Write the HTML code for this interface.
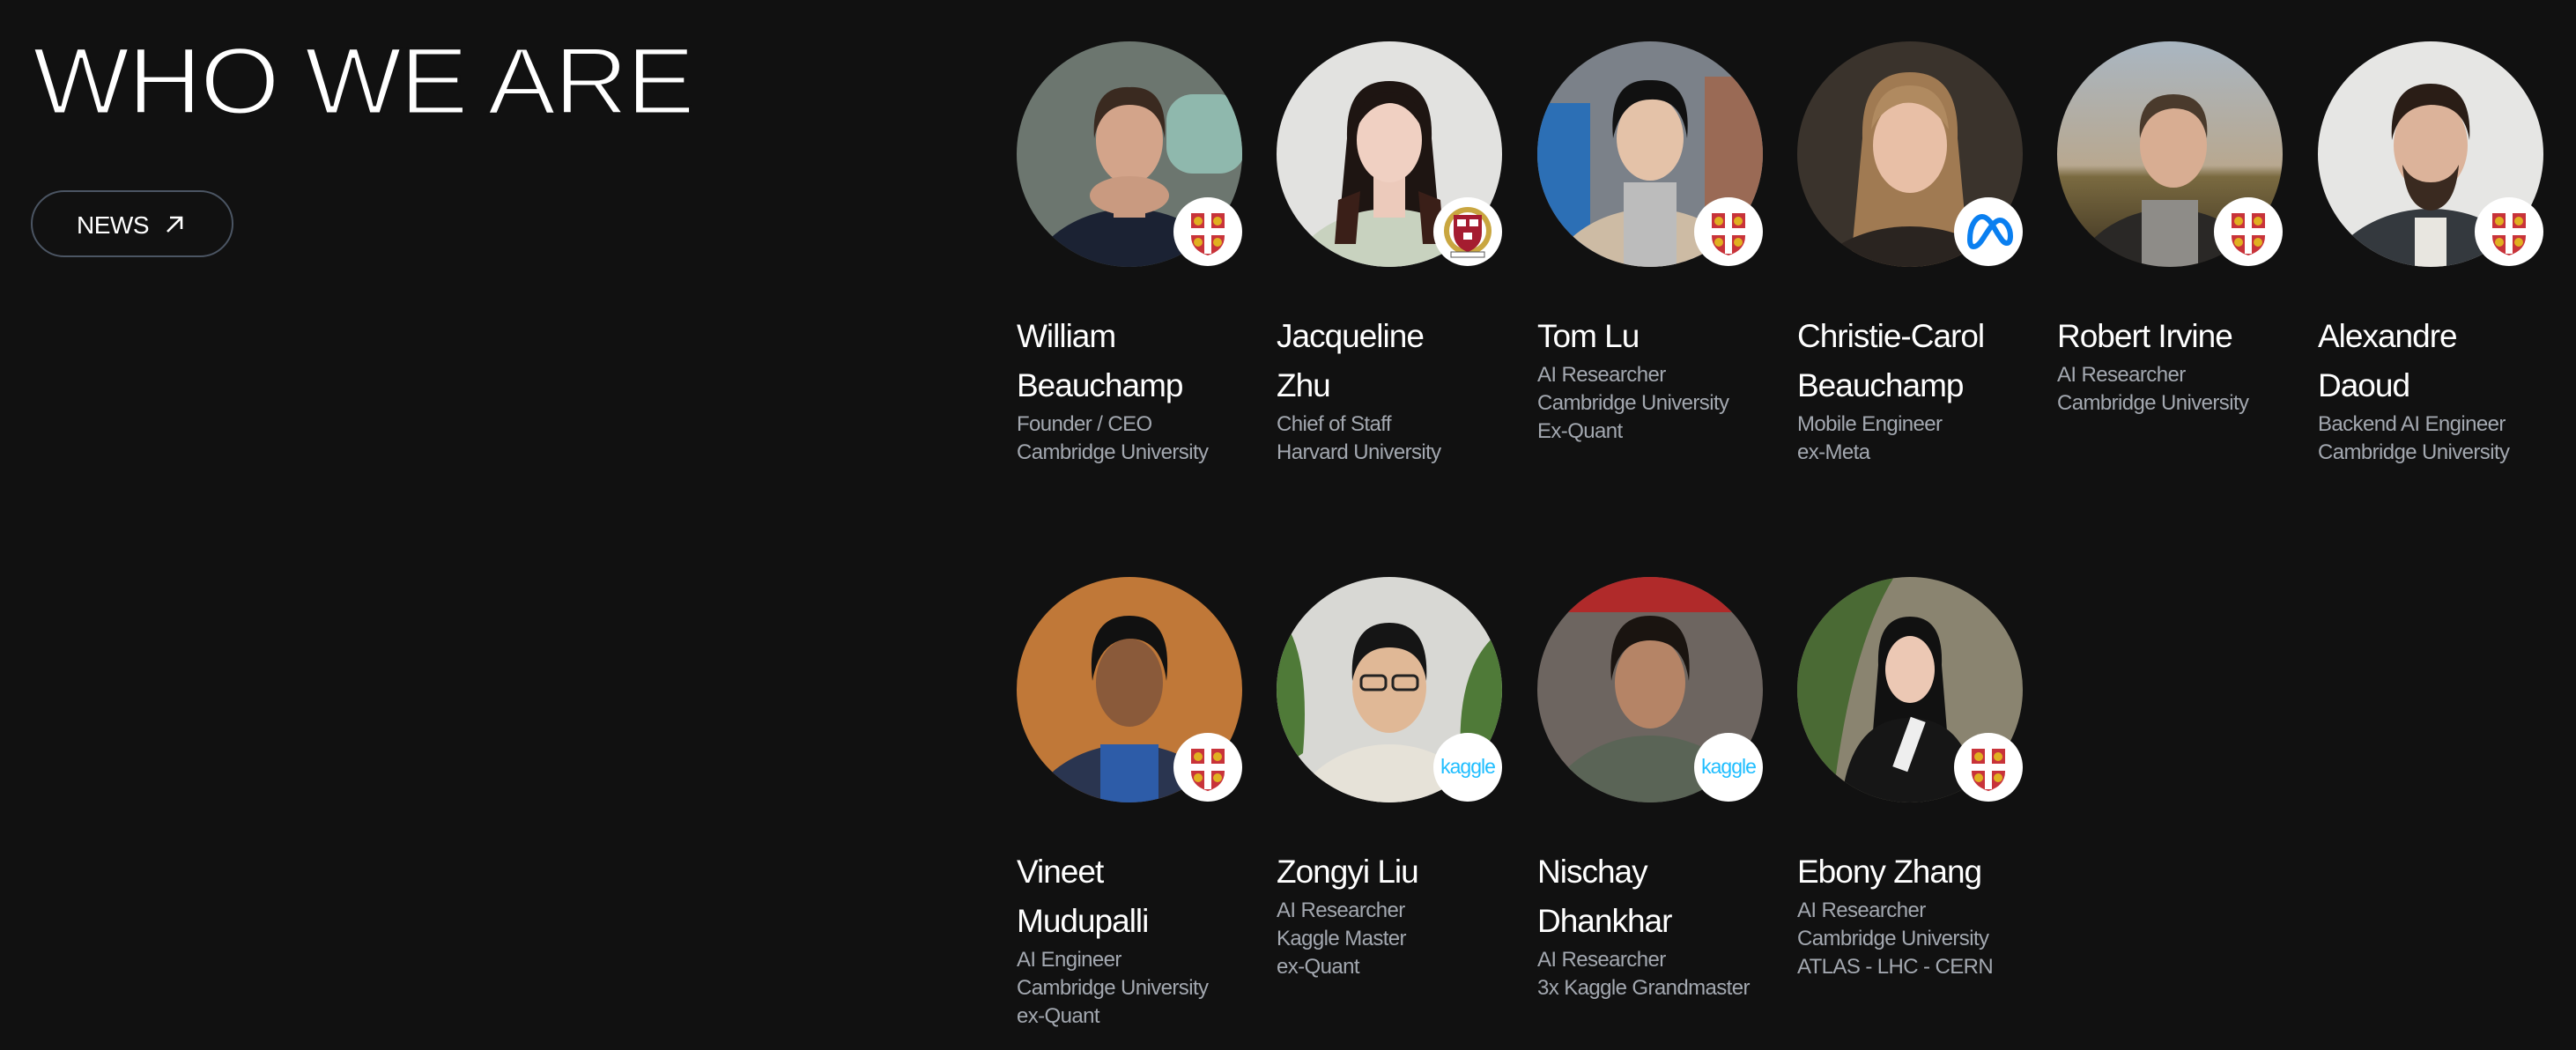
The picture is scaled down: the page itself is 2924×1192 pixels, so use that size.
<!DOCTYPE html>
<html><head><meta charset="utf-8"><style>
html,body{margin:0;padding:0;background:#111;width:2924px;height:1192px;overflow:hidden;font-family:"Liberation Sans",Arial,sans-serif;color:#fff}
.title{position:absolute;left:37px;top:38px;font-size:108px;line-height:108px;letter-spacing:-2px;font-weight:400;white-space:nowrap;transform:scaleX(1.08);transform-origin:left;-webkit-text-stroke:3px #111}
.news{position:absolute;left:35px;top:216px;width:226px;height:72px;border:2px solid #4b5563;border-radius:40px;box-sizing:content-box}
.news span{position:absolute;left:50px;top:22px;font-size:28px;letter-spacing:-0.5px}
.news svg{position:absolute;left:148px;top:24px}
.card{position:absolute;width:290px}
.av{position:absolute;left:0;top:0;width:256px;height:256px;border-radius:50%;overflow:hidden}
.av svg{display:block}
.badge{position:absolute;left:178px;top:177px;width:78px;height:78px;border-radius:50%;background:#fff;overflow:hidden}
.badge svg{position:absolute;left:0;top:0}
.name{position:absolute;left:0;top:307px;font-size:37px;line-height:56px;letter-spacing:-1px;white-space:nowrap}
.sub{font-size:24px;line-height:32px;color:#a3a8b0;letter-spacing:-0.6px}
</style></head><body>
<div class="title">WHO WE ARE</div>
<div class="news"><span>NEWS</span><svg width="26" height="26" viewBox="0 0 26 26"><path d="M5 21 L20 6 M8 5 H21 V18" stroke="#fff" stroke-width="2.6" fill="none"/></svg></div>

<div class="card" style="left:1154px;top:47px">
<div class="av"><svg width="256" height="256"><rect width="256" height="256" fill="#6c766f"/><rect x="170" y="60" width="90" height="90" rx="30" fill="#8fb8ad"/><ellipse cx="128" cy="300" rx="125" ry="110" fill="#1b2233"/><rect x="110" y="150" width="36" height="50" fill="#c99a80"/><ellipse cx="128" cy="112" rx="38" ry="50" fill="#d3a48a"/><ellipse cx="128" cy="175" rx="45" ry="22" fill="#c99a80"/><path d="M88 110 Q84 50 128 52 Q172 50 168 110 Q162 72 128 72 Q96 72 88 110Z" fill="#3a2a20"/></svg></div>
<div class="badge"><svg width="78" height="78" viewBox="0 0 78 78"><path d="M20 18 H58 V44 Q58 60 39 66 Q20 60 20 44Z" fill="#c8333a"/><rect x="35" y="18" width="8" height="46" fill="#fff"/><rect x="20" y="35" width="38" height="8" fill="#fff"/><circle cx="28" cy="27" r="5" fill="#e0b020"/><circle cx="50" cy="27" r="5" fill="#e0b020"/><circle cx="28" cy="51" r="5" fill="#e0b020"/><circle cx="50" cy="51" r="5" fill="#e0b020"/></svg></div>
<div class="name">William<br>Beauchamp<div class="sub">Founder / CEO<br>Cambridge University</div></div>
</div>

<div class="card" style="left:1449px;top:47px">
<div class="av"><svg width="256" height="256"><rect width="256" height="256" fill="#e2e2e0"/><path d="M80 110 Q78 45 128 45 Q178 45 176 110 L186 220 L70 220Z" fill="#1e1512"/><ellipse cx="128" cy="300" rx="125" ry="110" fill="#c8d2bf"/><rect x="110" y="150" width="36" height="50" fill="#eccabb"/><ellipse cx="128" cy="112" rx="37" ry="48" fill="#f0d0c2"/><path d="M90 100 Q92 58 128 58 Q164 58 166 100 Q150 70 128 70 Q104 72 90 100Z" fill="#1e1512"/><path d="M70 180 L95 170 L90 230 L66 230Z M186 180 L161 170 L166 230 L190 230Z" fill="#3a1f18"/></svg></div>
<div class="badge"><svg width="78" height="78" viewBox="0 0 78 78"><circle cx="39" cy="38" r="27" fill="#c9a640"/><circle cx="39" cy="38" r="21" fill="#fff"/><path d="M23 20 H55 V40 Q55 56 39 62 Q23 56 23 40Z" fill="#a51c30"/><rect x="27" y="25" width="10" height="8" fill="#fff"/><rect x="41" y="25" width="10" height="8" fill="#fff"/><rect x="34" y="40" width="10" height="8" fill="#fff"/><rect x="20" y="62" width="38" height="6" fill="#fff" stroke="#555" stroke-width="1"/></svg></div>
<div class="name">Jacqueline<br>Zhu<div class="sub">Chief of Staff<br>Harvard University</div></div>
</div>

<div class="card" style="left:1745px;top:47px">
<div class="av"><svg width="256" height="256"><rect width="256" height="256" fill="#7b8189"/><rect x="0" y="70" width="60" height="190" fill="#2c6fb5"/><rect x="190" y="40" width="70" height="220" fill="#9a6a55"/><ellipse cx="128" cy="300" rx="125" ry="110" fill="#cdbba4"/><rect x="98" y="160" width="60" height="100" fill="#bcbcbc"/><ellipse cx="128" cy="110" rx="38" ry="48" fill="#e4c2a8"/><path d="M86 110 Q80 42 128 44 Q176 42 170 110 Q164 64 128 66 Q96 66 86 110Z" fill="#111"/></svg></div>
<div class="badge"><svg width="78" height="78" viewBox="0 0 78 78"><path d="M20 18 H58 V44 Q58 60 39 66 Q20 60 20 44Z" fill="#c8333a"/><rect x="35" y="18" width="8" height="46" fill="#fff"/><rect x="20" y="35" width="38" height="8" fill="#fff"/><circle cx="28" cy="27" r="5" fill="#e0b020"/><circle cx="50" cy="27" r="5" fill="#e0b020"/><circle cx="28" cy="51" r="5" fill="#e0b020"/><circle cx="50" cy="51" r="5" fill="#e0b020"/></svg></div>
<div class="name">Tom Lu<div class="sub">AI Researcher<br>Cambridge University<br>Ex-Quant</div></div>
</div>

<div class="card" style="left:2040px;top:47px">
<div class="av"><svg width="256" height="256"><rect width="256" height="256" fill="#3a332c"/><path d="M74 110 Q72 35 128 35 Q184 35 182 110 L196 260 L60 260Z" fill="#a07a52"/><ellipse cx="128" cy="300" rx="125" ry="90" fill="#2a2420"/><ellipse cx="128" cy="118" rx="42" ry="54" fill="#e8bfa6"/><path d="M84 100 Q88 50 128 50 Q168 50 172 100 Q150 66 120 70 Q96 76 84 100Z" fill="#b08a60"/></svg></div>
<div class="badge"><svg width="78" height="78" viewBox="0 0 78 78"><path d="M18 48 C18 30 26 22 32 22 C40 22 46 36 50 42 C54 48 56 52 60 52 C63 52 64 48 64 44 C64 34 58 26 52 26 C46 26 40 36 36 42 C32 48 28 56 22 56 C19 56 18 52 18 48Z" fill="none" stroke="#0a7ff0" stroke-width="6" stroke-linejoin="round"/></svg></div>
<div class="name">Christie-Carol<br>Beauchamp<div class="sub">Mobile Engineer<br>ex-Meta</div></div>
</div>

<div class="card" style="left:2335px;top:47px">
<div class="av"><svg width="256" height="256"><defs><linearGradient id="sk" x1="0" y1="0" x2="0" y2="1"><stop offset="0" stop-color="#a9b6c2"/><stop offset="0.55" stop-color="#b8a890"/><stop offset="0.6" stop-color="#7a6a40"/><stop offset="1" stop-color="#3a3020"/></linearGradient></defs><rect width="256" height="256" fill="url(#sk)"/><ellipse cx="128" cy="300" rx="120" ry="110" fill="#2a2826"/><rect x="96" y="180" width="64" height="80" fill="#8e8c88"/><ellipse cx="132" cy="118" rx="38" ry="48" fill="#d8ad92"/><path d="M94 110 Q90 60 132 60 Q174 60 170 110 Q164 76 132 76 Q102 78 94 110Z" fill="#4a3a2c"/></svg></div>
<div class="badge"><svg width="78" height="78" viewBox="0 0 78 78"><path d="M20 18 H58 V44 Q58 60 39 66 Q20 60 20 44Z" fill="#c8333a"/><rect x="35" y="18" width="8" height="46" fill="#fff"/><rect x="20" y="35" width="38" height="8" fill="#fff"/><circle cx="28" cy="27" r="5" fill="#e0b020"/><circle cx="50" cy="27" r="5" fill="#e0b020"/><circle cx="28" cy="51" r="5" fill="#e0b020"/><circle cx="50" cy="51" r="5" fill="#e0b020"/></svg></div>
<div class="name">Robert Irvine<div class="sub">AI Researcher<br>Cambridge University</div></div>
</div>

<div class="card" style="left:2631px;top:47px">
<div class="av"><svg width="256" height="256"><rect width="256" height="256" fill="#e6e6e4"/><ellipse cx="128" cy="300" rx="130" ry="110" fill="#34393e"/><rect x="110" y="200" width="36" height="60" fill="#e8e6e0"/><ellipse cx="128" cy="118" rx="42" ry="54" fill="#dcb39a"/><path d="M96 140 Q100 190 128 192 Q156 190 160 140 Q150 160 128 160 Q106 160 96 140Z" fill="#3a2a20"/><path d="M84 112 Q80 48 128 48 Q176 48 172 112 Q166 72 128 72 Q92 74 84 112Z" fill="#2a1d16"/></svg></div>
<div class="badge"><svg width="78" height="78" viewBox="0 0 78 78"><path d="M20 18 H58 V44 Q58 60 39 66 Q20 60 20 44Z" fill="#c8333a"/><rect x="35" y="18" width="8" height="46" fill="#fff"/><rect x="20" y="35" width="38" height="8" fill="#fff"/><circle cx="28" cy="27" r="5" fill="#e0b020"/><circle cx="50" cy="27" r="5" fill="#e0b020"/><circle cx="28" cy="51" r="5" fill="#e0b020"/><circle cx="50" cy="51" r="5" fill="#e0b020"/></svg></div>
<div class="name">Alexandre<br>Daoud<div class="sub">Backend AI Engineer<br>Cambridge University</div></div>
</div>

<div class="card" style="left:1154px;top:655px">
<div class="av"><svg width="256" height="256"><rect width="256" height="256" fill="#c07838"/><ellipse cx="128" cy="300" rx="125" ry="110" fill="#2a3550"/><rect x="95" y="190" width="66" height="70" fill="#2d5ca8"/><ellipse cx="128" cy="120" rx="38" ry="50" fill="#8a5a3a"/><path d="M86 118 Q78 44 128 44 Q178 44 170 118 Q164 70 128 70 Q94 72 86 118Z" fill="#111"/></svg></div>
<div class="badge"><svg width="78" height="78" viewBox="0 0 78 78"><path d="M20 18 H58 V44 Q58 60 39 66 Q20 60 20 44Z" fill="#c8333a"/><rect x="35" y="18" width="8" height="46" fill="#fff"/><rect x="20" y="35" width="38" height="8" fill="#fff"/><circle cx="28" cy="27" r="5" fill="#e0b020"/><circle cx="50" cy="27" r="5" fill="#e0b020"/><circle cx="28" cy="51" r="5" fill="#e0b020"/><circle cx="50" cy="51" r="5" fill="#e0b020"/></svg></div>
<div class="name">Vineet<br>Mudupalli<div class="sub">AI Engineer<br>Cambridge University<br>ex-Quant</div></div>
</div>

<div class="card" style="left:1449px;top:655px">
<div class="av"><svg width="256" height="256"><rect width="256" height="256" fill="#d8d8d4"/><path d="M0 40 Q40 80 30 200 L0 220Z M256 60 Q200 100 210 220 L256 230Z" fill="#4f7a38"/><ellipse cx="128" cy="300" rx="120" ry="110" fill="#e6e2d8"/><ellipse cx="128" cy="125" rx="42" ry="52" fill="#e0b896"/><rect x="96" y="112" width="28" height="16" rx="5" fill="none" stroke="#222" stroke-width="3"/><rect x="132" y="112" width="28" height="16" rx="5" fill="none" stroke="#222" stroke-width="3"/><path d="M86 118 Q82 52 128 52 Q174 52 170 118 Q164 80 128 80 Q94 80 86 118Z" fill="#151515"/></svg></div>
<div class="badge"><svg width="78" height="78" viewBox="0 0 78 78"><text x="39" y="46" text-anchor="middle" font-family="Liberation Sans, sans-serif" font-size="23" fill="#20beff" letter-spacing="-1">kaggle</text></svg></div>
<div class="name">Zongyi Liu<div class="sub">AI Researcher<br>Kaggle Master<br>ex-Quant</div></div>
</div>

<div class="card" style="left:1745px;top:655px">
<div class="av"><svg width="256" height="256"><rect width="256" height="256" fill="#6d6560"/><rect width="256" height="40" fill="#b02a2a"/><ellipse cx="128" cy="300" rx="130" ry="120" fill="#5a6456"/><ellipse cx="128" cy="120" rx="40" ry="52" fill="#b58466"/><path d="M84 118 Q78 44 128 44 Q178 44 172 118 Q166 72 128 72 Q92 72 84 118Z" fill="#1a1410"/></svg></div>
<div class="badge"><svg width="78" height="78" viewBox="0 0 78 78"><text x="39" y="46" text-anchor="middle" font-family="Liberation Sans, sans-serif" font-size="23" fill="#20beff" letter-spacing="-1">kaggle</text></svg></div>
<div class="name">Nischay<br>Dhankhar<div class="sub">AI Researcher<br>3x Kaggle Grandmaster</div></div>
</div>

<div class="card" style="left:2040px;top:655px">
<div class="av"><svg width="256" height="256"><rect width="256" height="256" fill="#8a8470"/><path d="M0 0 H110 Q60 80 40 256 H0Z" fill="#4a6a34"/><path d="M92 100 Q90 45 128 45 Q166 45 164 100 L172 200 L84 200Z" fill="#111"/><path d="M50 256 Q60 160 128 160 Q196 160 206 256Z" fill="#161616"/><ellipse cx="128" cy="105" rx="28" ry="38" fill="#ecc8b4"/><rect x="118" y="160" width="18" height="60" fill="#eee" transform="rotate(20 127 190)"/></svg></div>
<div class="badge"><svg width="78" height="78" viewBox="0 0 78 78"><path d="M20 18 H58 V44 Q58 60 39 66 Q20 60 20 44Z" fill="#c8333a"/><rect x="35" y="18" width="8" height="46" fill="#fff"/><rect x="20" y="35" width="38" height="8" fill="#fff"/><circle cx="28" cy="27" r="5" fill="#e0b020"/><circle cx="50" cy="27" r="5" fill="#e0b020"/><circle cx="28" cy="51" r="5" fill="#e0b020"/><circle cx="50" cy="51" r="5" fill="#e0b020"/></svg></div>
<div class="name">Ebony Zhang<div class="sub">AI Researcher<br>Cambridge University<br>ATLAS - LHC - CERN</div></div>
</div>
</body></html>
